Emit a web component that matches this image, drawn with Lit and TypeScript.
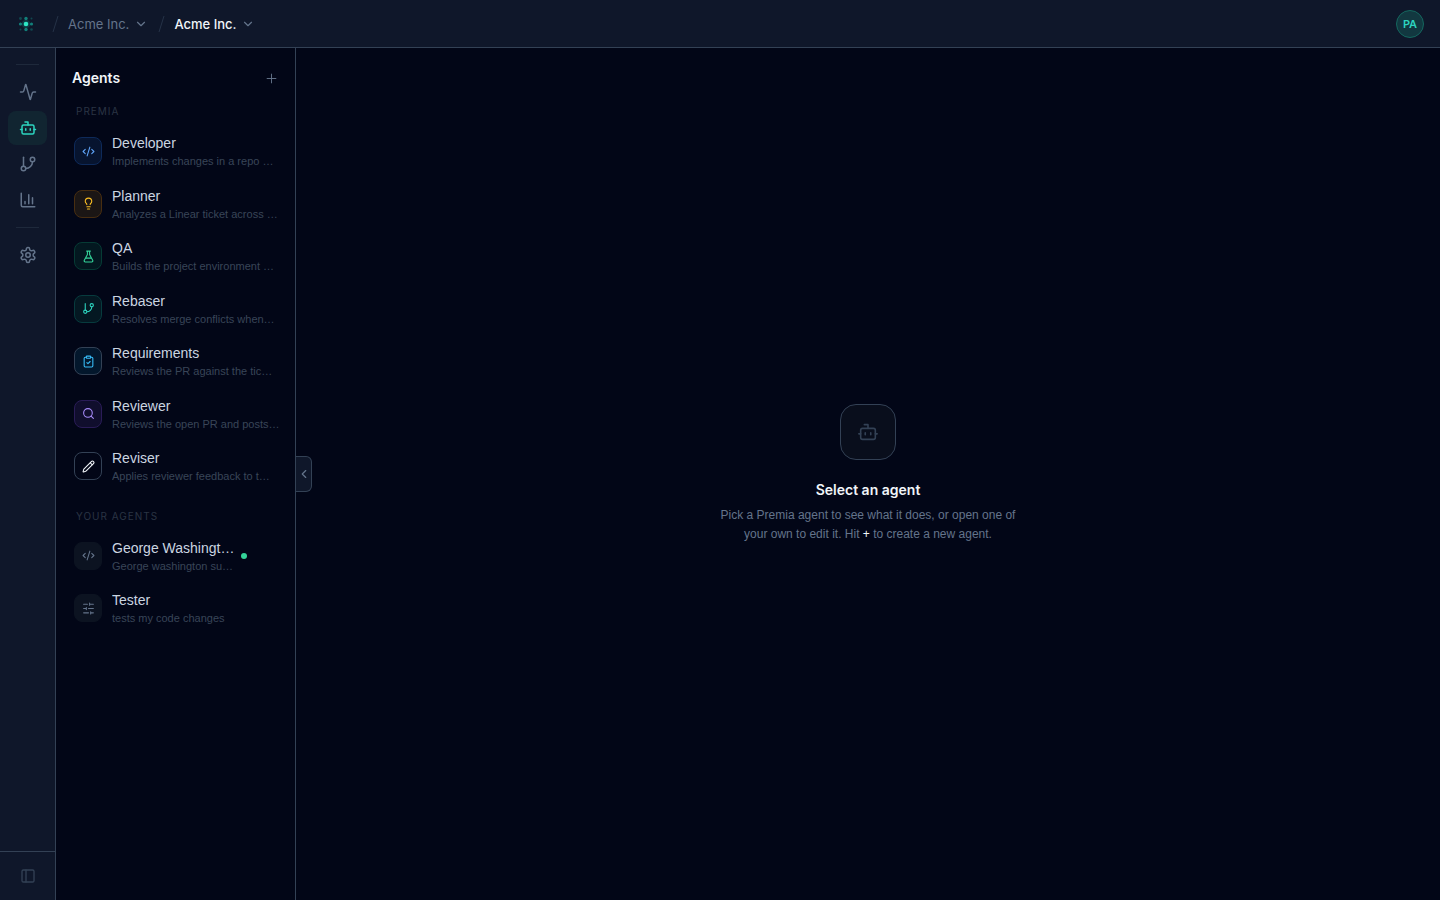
import { LitElement, html, css, svg, nothing } from "lit";
import { customElement, property, state } from "lit/decorators.js";
import { classMap } from "lit/directives/class-map.js";

const shapes = {
  activity: svg`<path d="M22 12h-2.48a2 2 0 0 0-1.93 1.46l-2.35 8.36a.25.25 0 0 1-.48 0L9.24 2.18a.25.25 0 0 0-.48 0l-2.35 8.36A2 2 0 0 1 4.49 12H2"/>`,
  bot: svg`<path d="M12 8V4H8"/><rect width="16" height="12" x="4" y="8" rx="2"/><path d="M2 14h2M20 14h2M15 13v2M9 13v2"/>`,
  branch: svg`<path d="M6 3v12"/><circle cx="18" cy="6" r="3"/><circle cx="6" cy="18" r="3"/><path d="M18 9a9 9 0 0 1-9 9"/>`,
  chart: svg`<path d="M3 3v16a2 2 0 0 0 2 2h16M18 17V9M13 17V5M8 17v-3"/>`,
  settings: svg`<path d="M12.22 2h-.44a2 2 0 0 0-2 2v.18a2 2 0 0 1-1 1.73l-.43.25a2 2 0 0 1-2 0l-.15-.08a2 2 0 0 0-2.73.73l-.22.38a2 2 0 0 0 .73 2.73l.15.1a2 2 0 0 1 1 1.72v.51a2 2 0 0 1-1 1.74l-.15.09a2 2 0 0 0-.73 2.73l.22.38a2 2 0 0 0 2.73.73l.15-.08a2 2 0 0 1 2 0l.43.25a2 2 0 0 1 1 1.73V20a2 2 0 0 0 2 2h.44a2 2 0 0 0 2-2v-.18a2 2 0 0 1 1-1.73l.43-.25a2 2 0 0 1 2 0l.15.08a2 2 0 0 0 2.73-.73l.22-.39a2 2 0 0 0-.73-2.73l-.15-.08a2 2 0 0 1-1-1.74v-.5a2 2 0 0 1 1-1.74l.15-.09a2 2 0 0 0 .73-2.73l-.22-.38a2 2 0 0 0-2.73-.73l-.15.08a2 2 0 0 1-2 0l-.43-.25a2 2 0 0 1-1-1.73V4a2 2 0 0 0-2-2z"/><circle cx="12" cy="12" r="3"/>`,
  panel: svg`<rect width="18" height="18" x="3" y="3" rx="2"/><path d="M9 3v18"/>`,
  plus: svg`<path d="M5 12h14M12 5v14"/>`,
  down: svg`<path d="m6 9 6 6 6-6"/>`,
  left: svg`<path d="m15 18-6-6 6-6"/>`,
  code: svg`<path d="m18 16 4-4-4-4M6 8l-4 4 4 4M14.5 4l-5 16"/>`,
  bulb: svg`<path d="M15 14c.2-1 .7-1.7 1.5-2.5 1-.9 1.5-2.2 1.5-3.5A6 6 0 0 0 6 8c0 1 .2 2.2 1.5 3.5.7.7 1.3 1.5 1.5 2.5M9 18h6M10 22h4"/>`,
  flask: svg`<path d="M14 2v6a2 2 0 0 0 .245.96l5.51 10.08A2 2 0 0 1 18 22H6a2 2 0 0 1-1.755-2.96l5.51-10.08A2 2 0 0 0 10 8V2M6.453 15h11.094M8.5 2h7"/>`,
  clipboard: svg`<rect width="8" height="4" x="8" y="2" rx="1"/><path d="M16 4h2a2 2 0 0 1 2 2v14a2 2 0 0 1-2 2H6a2 2 0 0 1-2-2V6a2 2 0 0 1 2-2h2M9 14l2 2 4-4"/>`,
  search: svg`<circle cx="11" cy="11" r="8"/><path d="m21 21-4.3-4.3"/>`,
  pencil: svg`<path d="M21.174 6.812a1 1 0 0 0-3.986-3.987L3.842 16.174a2 2 0 0 0-.5.83l-1.321 4.352a.5.5 0 0 0 .623.622l4.353-1.32a2 2 0 0 0 .83-.497zM15 5l4 4"/>`,
  sliders: svg`<path d="M21 4h-7M10 4H3M21 12h-9M8 12H3M21 20h-5M12 20H3M14 2v4M8 10v4M16 18v4"/>`,
};

type IconName = keyof typeof shapes;

const icon = (name: IconName, size: number, weight = 2) => html`<svg
  width=${size}
  height=${size}
  viewBox="0 0 24 24"
  fill="none"
  stroke="currentColor"
  stroke-width=${weight}
  stroke-linecap="round"
  stroke-linejoin="round"
  aria-hidden="true"
>${shapes[name]}</svg>`;

interface Agent {
  name: string;
  about: string;
  icon: IconName;
  tone: string;
  own?: boolean;
  live?: boolean;
}

const premiaAgents: Agent[] = [
  { name: "Developer", about: "Implements changes in a repo …", icon: "code", tone: "blue" },
  { name: "Planner", about: "Analyzes a Linear ticket across …", icon: "bulb", tone: "amber" },
  { name: "QA", about: "Builds the project environment …", icon: "flask", tone: "emerald" },
  { name: "Rebaser", about: "Resolves merge conflicts when…", icon: "branch", tone: "teal" },
  { name: "Requirements", about: "Reviews the PR against the tic…", icon: "clipboard", tone: "sky" },
  { name: "Reviewer", about: "Reviews the open PR and posts…", icon: "search", tone: "violet" },
  { name: "Reviser", about: "Applies reviewer feedback to t…", icon: "pencil", tone: "plain" },
];

const ownAgents: Agent[] = [
  { name: "George Washingt…", about: "George washington su…", icon: "code", tone: "muted", own: true, live: true },
  { name: "Tester", about: "tests my code changes", icon: "sliders", tone: "muted", own: true },
];

const base = css`
  * {
    box-sizing: border-box;
  }
  button {
    margin: 0;
    padding: 0;
    border: 0;
    background: none;
    color: inherit;
    font: inherit;
    text-align: left;
    cursor: pointer;
  }
  svg {
    display: block;
    flex: none;
  }
`;

@customElement("top-bar")
class TopBar extends LitElement {
  static styles = [
    base,
    css`
      :host {
        display: block;
      }
      .bar {
        display: flex;
        align-items: center;
        gap: 13px;
        height: 48px;
        padding: 0 16px;
        background: #0f172a;
        border-bottom: 1px solid #334155;
      }
      .crumbs {
        display: flex;
        align-items: center;
        gap: 7px;
      }
      .slash {
        color: #253247;
      }
      .crumb {
        display: flex;
        align-items: center;
        gap: 5px;
        font-size: 13px;
        line-height: 20px;
        font-weight: 500;
        color: #f1f5f9;
      }
      .crumb svg {
        color: #64748b;
      }
      .parent {
        font-weight: 400;
        color: #64748b;
      }
      .avatar {
        display: grid;
        place-items: center;
        width: 28px;
        height: 28px;
        margin-left: auto;
        border: 1px solid #14675f;
        border-radius: 50%;
        background: #123840;
        color: #2dd4bf;
        font-size: 11px;
        line-height: 16px;
        font-weight: 600;
      }
    `,
  ];

  render() {
    const mark = html`<svg class="slash" width="12" height="18" viewBox="0 0 12 18" fill="none" stroke="currentColor" aria-hidden="true"><path d="M9 1 4 17" /></svg>`;
    return html`<header class="bar">
      <svg width="20" height="20" viewBox="0 0 20 20" fill="#14b8a6" aria-hidden="true">
        <circle cx="10" cy="10" r="4" opacity=".22" />
        <g opacity=".3">
          <circle cx="4.5" cy="4.5" r="1.4" /><circle cx="15.5" cy="4.5" r="1" />
          <circle cx="4.5" cy="15.5" r="1" /><circle cx="15.5" cy="15.5" r="1.3" />
        </g>
        <g opacity=".65">
          <circle cx="10" cy="4.5" r="1.7" /><circle cx="4.5" cy="10" r="1.6" />
          <circle cx="15.5" cy="10" r="1.6" /><circle cx="10" cy="15.5" r="1.7" />
        </g>
        <circle cx="10" cy="10" r="2.3" fill="#2ee6c5" />
      </svg>
      <nav class="crumbs" aria-label="Workspace">
        ${mark}<button class="crumb parent">Acme Inc.${icon("down", 14)}</button>
        ${mark}<button class="crumb">Acme Inc.${icon("down", 14)}</button>
      </nav>
      <button class="avatar" aria-label="Account">PA</button>
    </header>`;
  }
}

@customElement("side-rail")
class SideRail extends LitElement {
  static styles = [
    base,
    css`
      :host {
        display: flex;
        flex-direction: column;
        width: 56px;
        background: #0f172a;
        border-right: 1px solid #334155;
      }
      .links {
        display: flex;
        flex: 1;
        flex-direction: column;
        gap: 2px;
        padding: 16px 8px;
      }
      .rule {
        height: 1px;
        margin: 0 8px 8px;
        border: 0;
        background: #1e293b;
      }
      .links a + .rule {
        margin-top: 8px;
      }
      .link {
        display: grid;
        place-items: center;
        height: 34px;
        border-radius: 8px;
        color: #64748b;
      }
      .current {
        background: #112531;
        color: #2dd4bf;
      }
      .foot {
        display: grid;
        place-items: center;
        height: 49px;
        border-top: 1px solid #334155;
        color: #334155;
      }
    `,
  ];

  render() {
    const link = (name: IconName, label: string, current = false) => html`<a
      class=${classMap({ link: true, current })}
      href="#${name}"
      aria-label=${label}
      >${icon(name, 18)}</a
    >`;
    return html`<nav class="links" aria-label="Main">
        <hr class="rule" />
        ${link("activity", "Activity")} ${link("bot", "Agents", true)} ${link("branch", "Branches")}
        ${link("chart", "Reports")}
        <hr class="rule" />
        ${link("settings", "Settings")}
      </nav>
      <button class="foot" aria-label="Toggle navigation">${icon("panel", 16)}</button>`;
  }
}

@customElement("agent-row")
class AgentRow extends LitElement {
  @property({ attribute: false }) agent!: Agent;

  static styles = [
    base,
    css`
      :host {
        display: block;
      }
      .row {
        display: flex;
        align-items: center;
        gap: 10px;
        width: 100%;
        padding: 8px 0 8px 10px;
        border-radius: 8px;
        font-family: "Liberation Sans", Arial, sans-serif;
      }
      .own {
        gap: 0;
        padding-right: 40px;
      }
      .own .tile {
        margin-right: 10px;
      }
      .tile {
        display: grid;
        flex: none;
        place-items: center;
        width: 28px;
        height: 28px;
        border: 1px solid;
        border-radius: 8px;
      }
      .tile svg {
        margin-left: 1px;
      }
      .text {
        display: block;
        flex: 1;
        min-width: 0;
      }
      .name,
      .about {
        display: block;
        overflow: hidden;
        text-overflow: ellipsis;
        white-space: nowrap;
      }
      .name {
        color: #cbd5e1;
        font-size: 14px;
        line-height: 20px;
      }
      .about {
        color: #394558;
        font-size: 11px;
        line-height: 1.5;
      }
      .dot {
        width: 6px;
        height: 6px;
        border-radius: 50%;
        background: #34d399;
      }
      .blue {
        color: #60a5fa;
        background: #07142f;
        border-color: #0e2a5a;
      }
      .amber {
        color: #fbbf24;
        background: #1b1615;
        border-color: #482e11;
      }
      .emerald {
        color: #34d399;
        background: #031820;
        border-color: #063b35;
      }
      .teal {
        color: #2dd4bf;
        background: #041822;
        border-color: #073b3e;
      }
      .sky {
        color: #38bdf8;
        background: #03172c;
        border-color: #334155;
      }
      .violet {
        color: #a78bfa;
        background: #100e2d;
        border-color: #2a1c57;
      }
      .plain {
        color: #f1f5f9;
        background: #020617;
        border-color: #334155;
      }
      .muted {
        color: #64748b;
        background: #0c1321;
        border-color: #0c1321;
      }
    `,
  ];

  render() {
    const a = this.agent;
    return html`<button class=${classMap({ row: true, own: !!a.own })}>
      <span class="tile ${a.tone}">${icon(a.icon, 13)}</span>
      <span class="text"><span class="name">${a.name}</span><span class="about">${a.about}</span></span>
      ${a.live ? html`<span class="dot"></span>` : nothing}
    </button>`;
  }
}

@customElement("app-root")
class AppRoot extends LitElement {
  @state() private open = true;

  static styles = [
    base,
    css`
      :host {
        display: flex;
        flex-direction: column;
        min-height: 100vh;
        background: #020617;
        color: #f1f5f9;
        font-family: Inter, "Liberation Sans", sans-serif;
      }
      .body {
        display: flex;
        flex: 1;
      }
      .agents {
        flex: none;
        width: 240px;
        border-right: 1px solid #334155;
      }
      .head {
        display: flex;
        align-items: center;
        justify-content: space-between;
        padding: 20px 16px 16px;
      }
      .title {
        margin: 0;
        font-size: 14px;
        line-height: 20px;
        font-weight: 600;
      }
      .add {
        color: #64748b;
      }
      .group {
        padding: 0 8px 16px;
      }
      .label {
        margin: 0;
        padding: 0 12px 6px;
        color: #2a3444;
        font-size: 10px;
        line-height: 15px;
        font-weight: 400;
        letter-spacing: 1px;
        text-transform: uppercase;
      }
      .main {
        position: relative;
        display: grid;
        flex: 1;
        place-items: center;
      }
      .collapse {
        position: absolute;
        top: calc(50% - 18px);
        left: 0;
        display: grid;
        place-items: center;
        width: 16px;
        height: 36px;
        border: 1px solid #334155;
        border-left: 0;
        border-radius: 0 6px 6px 0;
        background: #0f172a;
        color: #64748b;
      }
      .empty {
        display: flex;
        flex-direction: column;
        align-items: center;
        max-width: 320px;
        text-align: center;
      }
      .badge {
        display: grid;
        place-items: center;
        width: 56px;
        height: 56px;
        margin-bottom: 20px;
        border: 1px solid #334155;
        border-radius: 16px;
        background: #090e1c;
        color: #334155;
      }
      .hint {
        max-width: 304px;
        margin: 6px 0 0;
        color: #64748b;
        font-family: "Liberation Sans", Arial, sans-serif;
        font-size: 12px;
        line-height: 19px;
      }
      .key {
        color: #f1f5f9;
        font-weight: 500;
      }
    `,
  ];

  private group(label: string, agents: Agent[]) {
    return html`<section class="group">
      <h3 class="label">${label}</h3>
      ${agents.map((agent) => html`<agent-row .agent=${agent}></agent-row>`)}
    </section>`;
  }

  render() {
    return html`<top-bar></top-bar>
      <div class="body">
        <side-rail></side-rail>
        ${this.open
          ? html`<aside class="agents">
              <div class="head">
                <h2 class="title">Agents</h2>
                <button class="add" aria-label="New agent">${icon("plus", 15, 1.5)}</button>
              </div>
              ${this.group("Premia", premiaAgents)} ${this.group("Your agents", ownAgents)}
            </aside>`
          : nothing}
        <main class="main">
          <button class="collapse" aria-label="Toggle agent list" @click=${() => (this.open = !this.open)}>
            ${icon("left", 14)}
          </button>
          <div class="empty">
            <div class="badge">${icon("bot", 22, 1.75)}</div>
            <h1 class="title">Select an agent</h1>
            <p class="hint">
              Pick a Premia agent to see what it does, or open one of your own to edit it. Hit
              <span class="key">+</span> to create a new agent.
            </p>
          </div>
        </main>
      </div>`;
  }
}
